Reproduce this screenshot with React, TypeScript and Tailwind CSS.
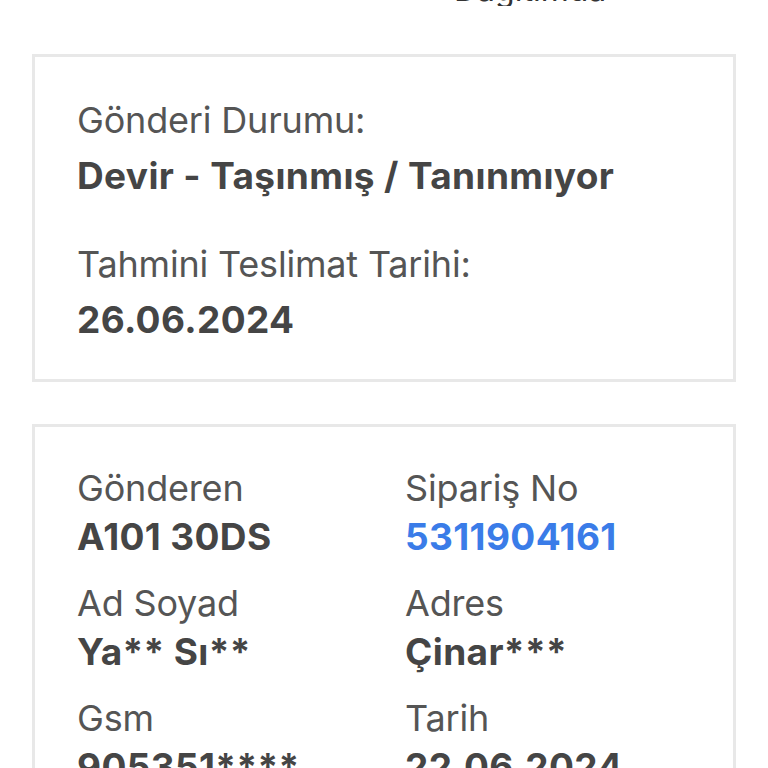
const font = { fontFamily: "Inter, 'Noto Sans', sans-serif" };

type Field = { label: string; value: string; link?: boolean };

const fields: Field[] = [
  { label: "Gönderen", value: "A101 30DS" },
  { label: "Sipariş No", value: "5311904161", link: true },
  { label: "Ad Soyad", value: "Ya** Sı**" },
  { label: "Adres", value: "Çinar***" },
  { label: "Gsm", value: "905351****" },
  { label: "Tarih", value: "22.06.2024" },
];

const label = "text-[36px] leading-[42px] tracking-[-0.005em] text-[#555]";
const value = "text-[37px] font-bold leading-[42px] tracking-[0.01em]";

export default function App() {
  return (
    <main className="h-[768px] w-[768px] overflow-hidden bg-white" style={font}>
      {/* cut-off heading from the section above */}
      <div className="flex h-[6px] items-end overflow-hidden pl-[454px]">
        <span className="text-[32px] leading-none text-[#333]">Dağıtımda</span>
      </div>

      <div className="px-[32px] pt-[48px]">
        <section className="border-[3px] border-[#e8e8e8] px-[42px] pb-[38px] pt-[42px]">
          <p className={label}>Gönderi Durumu:</p>
          <p className={value + " mt-[14px] text-[#454545]"}>Devir - Taşınmış / Tanınmıyor</p>
          <p className={label + " mt-[46px]"}>Tahmini Teslimat Tarihi:</p>
          <p className={value + " mt-[14px] text-[#454545]"}>26.06.2024</p>
        </section>

        <section className="mt-[42px] border-[3px] border-[#e8e8e8] px-[42px] pt-[40px]">
          <div className="grid grid-cols-[328px_1fr] gap-y-[24px]">
            {fields.map((f) => (
              <div key={f.label} className="flex flex-col gap-[7px]">
                <span className={label}>{f.label}</span>
                <span className={value + (f.link ? " text-[#3a7ce8]" : " text-[#454545]")}>
                  {f.value}
                </span>
              </div>
            ))}
          </div>
        </section>
      </div>
    </main>
  );
}
